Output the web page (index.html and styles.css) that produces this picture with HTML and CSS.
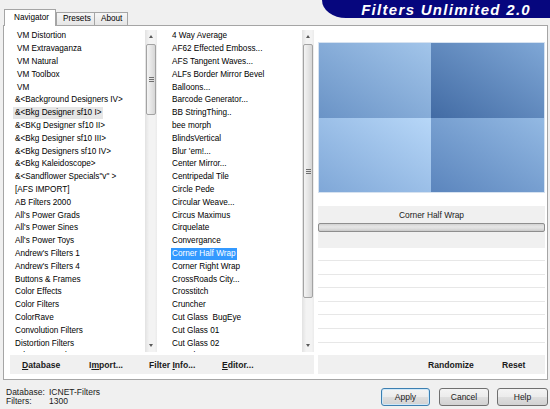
FILE: index.html
```html
<!DOCTYPE html>
<html>
<head>
<meta charset="utf-8">
<link rel="stylesheet" href="styles.css">
</head>
<body>
<div class="app">
  <div class="top">
    <div class="tabs">
      <div class="tab active">Navigator</div>
      <div class="tab">Presets</div>
      <div class="tab">About</div>
    </div>
    <div class="banner">Filters Unlimited 2.0</div>
  </div>
  <div class="panel">
    <div class="leftpane">
      <div class="lists">
        <div class="list list1">
          <div class="it ind"><span>VM Distortion</span></div>
          <div class="it ind"><span>VM Extravaganza</span></div>
          <div class="it ind"><span>VM Natural</span></div>
          <div class="it ind"><span>VM Toolbox</span></div>
          <div class="it ind"><span>VM</span></div>
          <div class="it"><span>&amp;&lt;Background Designers IV&gt;</span></div>
          <div class="it"><span class="hov">&amp;&lt;Bkg Designer sf10 I&gt;</span></div>
          <div class="it"><span>&amp;&lt;BKg Designer sf10 II&gt;</span></div>
          <div class="it"><span>&amp;&lt;Bkg Designer sf10 III&gt;</span></div>
          <div class="it"><span>&amp;&lt;Bkg Designers sf10 IV&gt;</span></div>
          <div class="it"><span>&amp;&lt;Bkg Kaleidoscope&gt;</span></div>
          <div class="it"><span>&amp;&lt;Sandflower Specials"v" &gt;</span></div>
          <div class="it"><span>[AFS IMPORT]</span></div>
          <div class="it"><span>AB Filters 2000</span></div>
          <div class="it"><span>All's Power Grads</span></div>
          <div class="it"><span>All's Power Sines</span></div>
          <div class="it"><span>All's Power Toys</span></div>
          <div class="it"><span>Andrew's Filters 1</span></div>
          <div class="it"><span>Andrew's Filters 4</span></div>
          <div class="it"><span>Buttons &amp; Frames</span></div>
          <div class="it"><span>Color Effects</span></div>
          <div class="it"><span>Color Filters</span></div>
          <div class="it"><span>ColorRave</span></div>
          <div class="it"><span>Convolution Filters</span></div>
          <div class="it"><span>Distortion Filters</span></div>
          <div class="it"><span>Edges, Round</span></div>
        </div>
        <div class="sb">
          <div class="arr"><i class="up"></i></div>
          <div class="track"><div class="thumb t1"><i class="grip"></i></div></div>
          <div class="arr"><i class="down"></i></div>
        </div>
        <div class="list list2">
          <div class="it"><span>4 Way Average</span></div>
          <div class="it"><span>AF62 Effected Emboss...</span></div>
          <div class="it"><span>AFS Tangent Waves...</span></div>
          <div class="it"><span>ALFs Border Mirror Bevel</span></div>
          <div class="it"><span>Balloons...</span></div>
          <div class="it"><span>Barcode Generator...</span></div>
          <div class="it"><span>BB StringThing..</span></div>
          <div class="it"><span>bee morph</span></div>
          <div class="it"><span>BlindsVertical</span></div>
          <div class="it"><span>Blur 'em!...</span></div>
          <div class="it"><span>Center Mirror...</span></div>
          <div class="it"><span>Centripedal Tile</span></div>
          <div class="it"><span>Circle Pede</span></div>
          <div class="it"><span>Circular Weave...</span></div>
          <div class="it"><span>Circus Maximus</span></div>
          <div class="it"><span>Cirquelate</span></div>
          <div class="it"><span>Convergance</span></div>
          <div class="it"><span class="sel">Corner Half Wrap</span></div>
          <div class="it"><span>Corner Right Wrap</span></div>
          <div class="it"><span>CrossRoads City...</span></div>
          <div class="it"><span>Crosstitch</span></div>
          <div class="it"><span>Cruncher</span></div>
          <div class="it"><span>Cut Glass  BugEye</span></div>
          <div class="it"><span>Cut Glass 01</span></div>
          <div class="it"><span>Cut Glass 02</span></div>
          <div class="it"><span>Cut Glass 03</span></div>
        </div>
        <div class="sb">
          <div class="arr"><i class="up"></i></div>
          <div class="track"><div class="thumb t2"><i class="grip"></i></div></div>
          <div class="arr"><i class="down"></i></div>
        </div>
      </div>
      <div class="band cmds">
        <span><u>D</u>atabase</span>
        <span>I<u>m</u>port...</span>
        <span>Filter <u>I</u>nfo...</span>
        <span><u>E</u>ditor...</span>
      </div>
    </div>
    <div class="rightpane">
      <div class="preview">
        <div class="q q1"></div>
        <div class="q q2"></div>
        <div class="q q3"></div>
        <div class="q q4"></div>
      </div>
      <div class="fband">
        <div class="fname">Corner Half Wrap</div>
        <div class="slider"></div>
      </div>
      <div class="rows">
        <div class="row"></div>
        <div class="row"></div>
        <div class="row"></div>
        <div class="row"></div>
        <div class="row"></div>
        <div class="row"></div>
        <div class="row"></div>
      </div>
      <div class="band rbtns">
        <span>Randomize</span>
        <span>Reset</span>
      </div>
    </div>
  </div>
  <div class="footer">
    <div class="status">
      <span>Database:</span><span>ICNET-Filters</span>
      <span>Filters:</span><span>1300</span>
    </div>
    <div class="buttons">
      <div class="btn def">Apply</div>
      <div class="btn b2">Cancel</div>
      <div class="btn b3">Help</div>
    </div>
  </div>
</div>
</body>
</html>
```

FILE: styles.css
```css
* { box-sizing: border-box; }
html, body {
  margin: 0;
  padding: 0;
  background: #f0f0f0;
}
body {
  font-family: "Liberation Sans", Arial, sans-serif;
  font-size: 8.2px;
  color: #000;
}
.app {
  width: 550px;
  height: 409px;
  overflow: hidden;
  display: flex;
  flex-direction: column;
}

/* top row */
.top {
  height: 25px;
  display: flex;
  position: relative;
  z-index: 2;
}
.tabs {
  display: flex;
  align-items: flex-end;
  padding-left: 4px;
  align-self: flex-end;
}
.tab {
  height: 13px;
  border: 1px solid #a5a5a5;
  border-bottom: none;
  background: linear-gradient(#f6f6f6, #e6e6e6);
  padding-left: 6px;
  line-height: 12px;
  font-size: 8.2px;
}
.tab:nth-child(2) { width: 39px; }
.tab:nth-child(3) { width: 34px; margin-left: -1px; }
.tab.active {
  width: 52px;
  height: 17px;
  margin-bottom: -1px;
  background: #fff;
  padding-left: 9px;
  line-height: 15px;
}
.banner {
  margin-left: auto;
  width: 228px;
  height: 18px;
  background: #06067e;
  border-bottom-left-radius: 24px 18px;
  color: #fff;
  font-weight: bold;
  font-style: italic;
  font-size: 15px;
  letter-spacing: 1.3px;
  text-align: right;
  padding-right: 19px;
  padding-top: 1px;
  line-height: 17px;
}

/* panel */
.panel {
  margin-left: 3px;
  width: 545px;
  height: 355px;
  border: 1px solid #a5a5a5;
  background: #fff;
  display: flex;
  padding: 4px 0 0 6px;
}
.leftpane {
  width: 304px;
  display: flex;
  flex-direction: column;
}
.lists {
  height: 322px;
  display: flex;
}
.list {
  height: 322px;
  overflow: hidden;
}
.list1 { width: 135px; padding-left: 3px; }
.list2 { width: 139px; margin-left: 6px; padding-left: 8px; }
.it {
  height: 12.8px;
  line-height: 12.8px;
  white-space: nowrap;
}
.it span {
  display: inline-block;
  padding: 0 2px;
  line-height: 12px;
  height: 12px;
  margin-top: 0.4px;
  white-space: pre;
  vertical-align: top;
}
.list2 .it span { padding: 0 1px; }
.it.ind span { padding-left: 4px; }
.it span.hov { background: #e6e6e6; }
.it span.sel { background: #3399ff; color: #fff; }

/* scrollbars */
.sb {
  width: 12px;
  height: 322px;
  display: flex;
  flex-direction: column;
  background: linear-gradient(to right, #e2e2e2, #f3f3f3 35%, #f3f3f3 80%, #ebebeb);
}
.arr {
  height: 13px;
  display: flex;
  align-items: center;
  justify-content: center;
}
.arr i {
  width: 0;
  height: 0;
  border-left: 2.5px solid transparent;
  border-right: 2.5px solid transparent;
}
.arr i.up { border-bottom: 3px solid #5a5a5a; }
.arr i.down { border-top: 3px solid #5a5a5a; }
.track { flex: 1; }
.thumb {
  margin: 1px 1px 0;
  border: 1px solid #a3a3a3;
  border-radius: 2px;
  background: linear-gradient(to right, #f4f4f4, #e6e6e6 50%, #d6d6d6);
  display: flex;
  align-items: center;
  justify-content: center;
}
.t1 { height: 71px; }
.t2 { height: 254px; }
.grip {
  width: 5px;
  height: 5px;
  background: repeating-linear-gradient(#6f6f6f 0 1px, transparent 1px 2px);
}

/* bands */
.band {
  height: 19px;
  background: #f0f0f0;
  font-weight: bold;
  font-size: 8.6px;
  color: #1a1a1a;
  line-height: 20px;
}
.cmds {
  margin-top: 3px;
  display: grid;
  grid-template-columns: 67px 60px 73px auto;
  padding-left: 12px;
}
.cmds u { text-decoration: underline; text-underline-offset: 1px; }
.rbtns {
  display: grid;
  grid-template-columns: 74px auto;
  padding-left: 110px;
}

/* right pane */
.rightpane {
  width: 227px;
  margin-left: 4px;
  display: flex;
  flex-direction: column;
}
.preview {
  margin: 13px 0 0 1px;
  width: 225px;
  height: 149px;
  display: grid;
  grid-template-columns: 112px 113px;
  grid-template-rows: 75px 74px;
  outline: 1px solid #d6e2f0;
}
.q1 { background: linear-gradient(to top right, #6a93c6, #a2c5ea); }
.q2 { background: linear-gradient(to top right, #426ba4, #7fa7d6); }
.q3 { background: linear-gradient(to top right, #7fa7d7, #b7d7f8); }
.q4 { background: linear-gradient(to top right, #5b85bd, #93b9e3); }
.fband {
  margin-top: 14px;
  height: 42px;
  background: #f0f0f0;
}
.fname {
  height: 17px;
  line-height: 18px;
  text-align: center;
  font-size: 8.4px;
  color: #1a1a1a;
}
.slider {
  height: 9px;
  border: 1px solid #8e8e8e;
  border-radius: 2px;
  background: linear-gradient(#d2d2d2, #e6e6e6 40%, #dcdcdc 70%, #c8c8c8);
}
.rows {
  height: 107px;
}
.row {
  height: 13.6px;
  border-bottom: 1px solid #e7e7e7;
}
.row:first-child { height: 13px; }

/* footer */
.footer {
  flex: 1;
  display: flex;
  justify-content: space-between;
}
.status {
  padding: 8px 0 0 6px;
  display: grid;
  grid-template-columns: 43px auto;
  line-height: 9px;
  font-size: 8.5px;
  color: #1a1a1a;
  align-content: start;
}
.buttons {
  display: flex;
  padding-top: 8px;
  padding-right: 2px;
}
.btn {
  width: 50px;
  height: 18px;
  border: 1px solid #707070;
  border-radius: 3px;
  background: linear-gradient(#f4f4f4, #ececec 48%, #dedede 52%, #d2d2d2);
  text-align: center;
  line-height: 16px;
  font-size: 8.5px;
  color: #1a1a1a;
}
.btn.def {
  width: 49px;
  border-color: #3c7fb1;
  box-shadow: inset 0 0 0 1px #cfe8f8;
}
.btn.b2 { margin-left: 9px; }
.btn.b3 { margin-left: 8px; width: 51px; }
```
